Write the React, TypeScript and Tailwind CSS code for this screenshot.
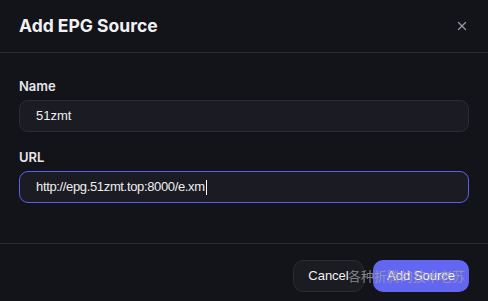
import { X } from "lucide-react";

export default function App() {
  return (
    <div className="w-[488px] h-[301px] overflow-hidden bg-[#13131a] font-['Inter',sans-serif]">
      {/* Header */}
      <div className="h-[53px] flex items-center justify-between pl-[19px] pr-[19px] border-b border-[#2a2a30]">
        <h2 className="text-[17.5px] font-bold text-[#f1f1f3] leading-none -mt-[1px]">
          Add EPG Source
        </h2>
        <X className="w-[14px] h-[14px] text-[#9a9aa3]" strokeWidth={2.2} />
      </div>

      {/* Body */}
      <div className="px-[19px] pt-[23px] pb-[40px] flex flex-col gap-[15px]">
        <div className="flex flex-col gap-[4px]">
          <label className="text-[13px] leading-[20px] font-semibold text-[#e6e6ea]">
            Name
          </label>
          <div className="h-[32px] rounded-[9px] bg-[#1b1b23] border border-[#2b2b33] flex items-center pl-[16px] font-['Liberation_Sans',sans-serif] text-[13px] text-[#eeeeee]">
            51zmt
          </div>
        </div>
        <div className="flex flex-col gap-[4px]">
          <label className="text-[13px] leading-[20px] font-semibold text-[#e6e6ea]">
            URL
          </label>
          <div className="h-[32px] rounded-[9px] bg-[#1b1b23] border border-[#5b5fe6] flex items-center pl-[16px] font-['Liberation_Sans',sans-serif] text-[13px] text-[#eeeeee]">
            <span className="tracking-[-0.35px]">http://epg.51zmt.top:8000/e.xm</span>
            <span className="w-px h-[15px] bg-white ml-px" />
          </div>
        </div>
      </div>

      {/* Footer */}
      <div className="border-t border-[#2a2a30] pt-[16px] px-[19px] flex justify-end font-['Liberation_Sans',sans-serif] text-[13px]">
        <div className="relative flex gap-[9px]">
          <button className="w-[71px] h-[32px] rounded-[10px] bg-[#1b1b22] border border-[#2b2b32] text-[#f2f2f2]">
            Cancel
          </button>
          <button className="w-[96px] h-[32px] rounded-[10px] bg-[#6366f1] text-white">
            Add Source
          </button>
          {/* watermark */}
          <span className="absolute left-[55px] top-[7px] text-[13px] leading-[18px] text-[#a0a0a8]/80 whitespace-nowrap font-['Noto_Sans_CJK_SC',sans-serif] pointer-events-none">
            各种折腾的技术老苏
          </span>
        </div>
      </div>
    </div>
  );
}
